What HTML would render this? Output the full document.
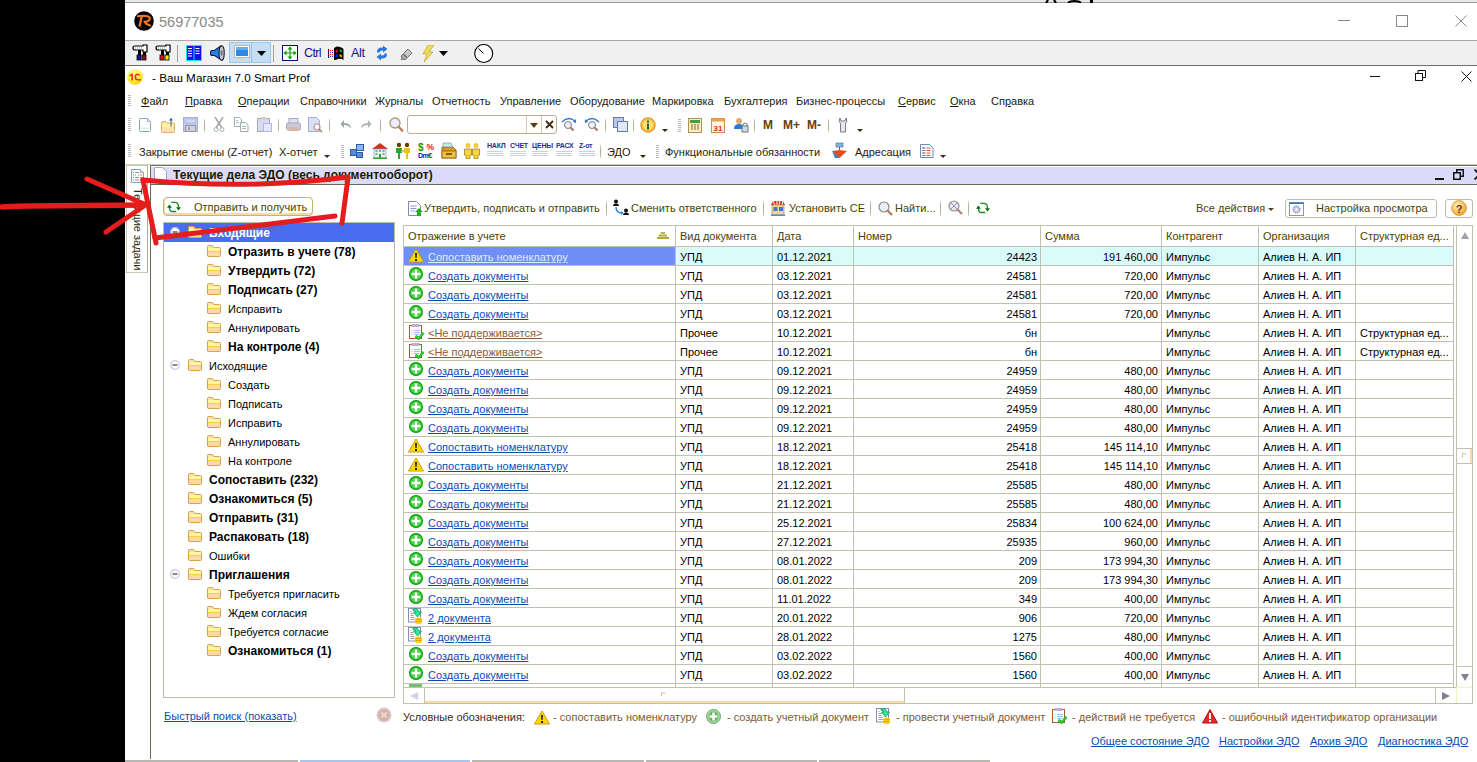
<!DOCTYPE html><html><head><meta charset="utf-8"><style>
*{box-sizing:border-box}
body{margin:0;width:1477px;height:762px;overflow:hidden;background:#000;position:relative;font-family:"Liberation Sans", sans-serif;font-size:11px;color:#000}
.a{position:absolute}
.t{position:absolute;white-space:nowrap;line-height:13px}
.b{font-weight:bold;font-size:12px}
.lnk{color:#0b4cb4;text-decoration:underline}
.ol{color:#4a4300}
</style></head><body>

<div class="a" style="left:125px;top:0;width:1352px;height:762px;background:#fff"></div>
<div class="a" style="left:125px;top:0;width:1352px;height:3px;background:#e8e8e8;border-bottom:1px solid #9a9a9a"></div>
<svg class="a" style="left:1040px;top:0px" width="60" height="3" viewBox="0 0 60 3"><path d="M6 3 L8 0 M14 0 L16 3" stroke="#000" stroke-width="2.2"/><path d="M28 3 Q30 1 34.5 1 Q39 1 41 3" stroke="#000" stroke-width="2" fill="none"/></svg>
<svg class="a" style="left:1090px;top:0px" width="6" height="3" viewBox="0 0 6 3"><rect x="0" y="0" width="3" height="3" fill="#000"/></svg>
<svg class="a" style="left:134px;top:11px" width="20" height="20" viewBox="0 0 20 20"><circle cx="10" cy="10" r="9.8" fill="#050505"/><path d="M3.8 5.2 Q10 4.6 13.5 5.2 Q16.5 6 15.6 8.3 Q14.6 10.6 10.8 10.8" stroke="#f07a22" stroke-width="2.1" fill="none" stroke-linecap="round"/><path d="M7.6 6.5 L5.7 14.6" stroke="#f07a22" stroke-width="2.3" stroke-linecap="round"/><path d="M10.5 10.8 Q12.5 13.6 16 14.4" stroke="#f07a22" stroke-width="2.1" fill="none" stroke-linecap="round"/></svg>
<div class="t" style="left:159px;top:13px;font-size:14.5px;color:#8a8a8a;line-height:18px">56977035</div>
<div class="a" style="left:1338px;top:20px;width:12px;height:1px;background:#888"></div>
<div class="a" style="left:1396px;top:15px;width:12px;height:12px;border:1px solid #888"></div>
<svg class="a" style="left:1455px;top:15px" width="12" height="12"><path d="M0.5 0.5L11.5 11.5M11.5 0.5L0.5 11.5" stroke="#888" stroke-width="1"/></svg>
<div class="a" style="left:125px;top:40px;width:1352px;height:26px;background:#f0f0f0;border-top:1px solid #a8a8a8;border-bottom:1px solid #707070"></div>
<svg class="a" style="left:127px;top:69px" width="16" height="16" viewBox="0 0 16 16"><defs><radialGradient id="g1c" cx="0.4" cy="0.3" r="0.75"><stop offset="0" stop-color="#fffcc0"/><stop offset="0.6" stop-color="#fff030"/><stop offset="1" stop-color="#f8d000"/></radialGradient></defs><circle cx="8" cy="8" r="7.8" fill="url(#g1c)"/><path d="M2.5 6 L5 4.5 L6 4.5 L6 11.5 L4.3 11.5 L4.3 6.8 L2.5 7.5Z" fill="#f83010"/><path d="M13 6.5 Q12.5 4.5 10.5 4.5 Q7.5 4.5 7.5 8 Q7.5 11.5 10.5 11.5 L14 11.5 L14 10 L10.5 10 Q9.2 10 9.2 8 Q9.2 6 10.5 6 Q11.3 6 11.5 6.8Z" fill="#f83010"/></svg>
<div class="t" style="left:152px;top:70px;font-size:11.7px;line-height:15px">- Ваш Магазин 7.0 Smart Prof</div>
<div class="a" style="left:1370px;top:76px;width:10px;height:1px;border-top:1.5px solid #111"></div>
<svg class="a" style="left:1415px;top:70px" width="11" height="11"><rect x="0.5" y="3.5" width="7" height="7" fill="none" stroke="#111"/><path d="M3 3.5V0.5H10.5V7.5H7.5" fill="none" stroke="#111"/></svg>
<svg class="a" style="left:1461px;top:71px" width="11" height="11"><path d="M0.5 0.5L10.5 10.5M10.5 0.5L0.5 10.5" stroke="#111" stroke-width="1"/></svg>
<div class="t" style="left:141px;top:95px;color:#1a1a10"><u>Ф</u>айл</div>
<div class="t" style="left:185px;top:95px;color:#1a1a10"><u>П</u>равка</div>
<div class="t" style="left:238px;top:95px;color:#1a1a10"><u>О</u>перации</div>
<div class="t" style="left:300px;top:95px;color:#1a1a10">Справочники</div>
<div class="t" style="left:375px;top:95px;color:#1a1a10">Журналы</div>
<div class="t" style="left:432px;top:95px;color:#1a1a10">Отчетность</div>
<div class="t" style="left:500px;top:95px;color:#1a1a10">Управление</div>
<div class="t" style="left:570px;top:95px;color:#1a1a10">Оборудование</div>
<div class="t" style="left:652px;top:95px;color:#1a1a10">Маркировка</div>
<div class="t" style="left:724px;top:95px;color:#1a1a10">Бухгалтерия</div>
<div class="t" style="left:796px;top:95px;color:#1a1a10">Бизнес-процессы</div>
<div class="t" style="left:898px;top:95px;color:#1a1a10"><u>С</u>ервис</div>
<div class="t" style="left:950px;top:95px;color:#1a1a10"><u>О</u>кна</div>
<div class="t" style="left:991px;top:95px;color:#1a1a10">Сп<u>р</u>авка</div>
<svg class="a" style="left:132px;top:44px" width="17" height="17" viewBox="0 0 17 17">
<path d="M1 4 Q1 2 3 2 L11 2 L11 1 L15 1 L15 8 L11 8 L11 6 L3 6 Q1 6 1 4Z" fill="#fff" stroke="#000" stroke-width="1.2"/>
<path d="M3 4h7" stroke="#888" stroke-dasharray="1 1"/>
<rect x="6" y="6" width="3" height="5" fill="#000"/><rect x="11" y="8" width="3" height="3" fill="#000"/>
<rect x="5" y="11" width="4" height="5" fill="#1010a0" stroke="#000" stroke-width="0.8"/><rect x="10" y="11" width="4" height="5" fill="#901010" stroke="#000" stroke-width="0.8"/></svg>
<svg class="a" style="left:155px;top:44px" width="17" height="17" viewBox="0 0 17 17">
<path d="M1 4 Q1 2 3 2 L11 2 L11 1 L15 1 L15 8 L11 8 L11 6 L3 6 Q1 6 1 4Z" fill="#fff" stroke="#000" stroke-width="1.2"/>
<path d="M3 4h7" stroke="#888" stroke-dasharray="1 1"/>
<rect x="6" y="6" width="3" height="5" fill="#000"/><rect x="11" y="8" width="3" height="3" fill="#000"/>
<rect x="5" y="11" width="4" height="5" fill="#f01010" stroke="#000" stroke-width="0.8"/><rect x="10" y="11" width="4" height="5" fill="#f8f000" stroke="#000" stroke-width="0.8"/></svg>
<div class="a" style="left:177px;top:45px;width:1px;height:17px;background:#a0a0a0"></div>
<svg class="a" style="left:186px;top:45px" width="16" height="16" viewBox="0 0 16 16"><rect x="0" y="0" width="16" height="16" fill="#10e8f8"/><rect x="1" y="1" width="6.5" height="14" fill="#1010e0"/><rect x="8.5" y="1" width="6.5" height="14" fill="#1010e0"/><path d="M2 3.5h4M2 6h4M2 8.5h4M2 11h4M9.5 3.5h4M9.5 6h4M9.5 8.5h4" stroke="#fff" stroke-width="1"/></svg>
<svg class="a" style="left:210px;top:45px" width="16" height="16" viewBox="0 0 16 16"><path d="M0.7 6.5 Q0.7 5.5 2 5.5 L4.5 5.5 L11 0.8 L12 15.2 L4.5 10.5 L2 10.5 Q0.7 10.5 0.7 9.5Z" fill="#2a80f0" stroke="#101830" stroke-width="1.1"/><ellipse cx="11.6" cy="8" rx="2.6" ry="7.2" fill="#c8c8d0" stroke="#101830" stroke-width="1.1"/><ellipse cx="11.6" cy="8" rx="1" ry="3" fill="#707080"/></svg>
<div class="a" style="left:229px;top:42px;width:42px;height:21px;background:#c6def3;border:1px solid #99c9ef"></div>
<div class="a" style="left:251px;top:43px;width:1px;height:19px;background:#99c9ef"></div>
<svg class="a" style="left:234px;top:45px" width="16" height="16" viewBox="0 0 16 16"><rect x="0.5" y="0.5" width="15" height="12" fill="#fff" stroke="#b8b8b8"/><rect x="2" y="2" width="12" height="9" fill="#2a88e8"/><rect x="2" y="2" width="12" height="3" fill="#60b0f0"/><rect x="6.5" y="12.5" width="3" height="1.5" fill="#c8c8c8"/><rect x="3" y="14" width="10" height="2" rx="1" fill="#d8d8d8"/></svg>
<svg class="a" style="left:257px;top:51px" width="9" height="5"><path d="M0 0h9L4.5 5z" fill="#000"/></svg>
<div class="a" style="left:273px;top:45px;width:1px;height:17px;background:#a0a0a0"></div>
<svg class="a" style="left:282px;top:45px" width="16" height="16" viewBox="0 0 16 16"><rect x="0.5" y="0.5" width="15" height="15" fill="#fff" stroke="#101070"/><path d="M8 2v12M2 8h12" stroke="#10a010" stroke-width="1.2"/><path d="M8 1.5l-2.5 3h5zM8 14.5l-2.5-3h5zM1.5 8l3-2.5v5zM14.5 8l-3-2.5v5z" fill="#10a010"/></svg>
<div class="t" style="left:304px;top:46px;font-size:12.5px;line-height:15px;color:#10109a;letter-spacing:-0.6px">Ctrl</div>
<svg class="a" style="left:328px;top:46px" width="16" height="15" viewBox="0 0 16 15"><path d="M6 2 Q9 -0.5 12 1 Q14 1.5 15.5 3 L15.5 14 Q13 12 10 13 Q8 14 6 14Z" fill="#000"/><path d="M7.5 5 L9.5 3 L10 5.5 L8 7Z" fill="#f01010"/><path d="M11.5 3 L13.5 4 L14 6.5 L12 5.5Z" fill="#10d010"/><path d="M7.5 9 L9.5 8 L10 10.5 L8 11.5Z" fill="#1020f0"/><path d="M11.5 8 L13.5 9 L14 11.5 L12 10.5Z" fill="#f0f010"/><path d="M0 4.5h5M0 8.5h5" stroke="#f02020" stroke-dasharray="1 1"/><path d="M0 6.5h5M0 10.5h5" stroke="#2040f0" stroke-dasharray="1 1"/><path d="M0.5 3v10" stroke="#000" stroke-dasharray="1 1"/></svg>
<div class="t" style="left:351px;top:46px;font-size:12.5px;line-height:15px;color:#10109a;letter-spacing:-0.3px">Alt</div>
<svg class="a" style="left:375px;top:45px" width="14" height="16" viewBox="0 0 14 16"><path d="M2 7 Q2 2 8 2.5 L8 0.5 L12.5 4 L8 7.5 L8 5.5 Q4.5 5 4 8Z" fill="#2a78e0"/><path d="M12 9 Q12 14 6 13.5 L6 15.5 L1.5 12 L6 8.5 L6 10.5 Q9.5 11 10 8Z" fill="#2a78e0"/></svg>
<svg class="a" style="left:400px;top:47px" width="14" height="14" viewBox="0 0 14 14"><path d="M1 13 L3 11" stroke="#808080" stroke-width="1.5"/><path d="M3 7 L7 11 L5.5 12.5 Q3 13 2 11.5 Q1 10 1.5 8.5Z" fill="#a8a8a8" stroke="#606060" stroke-width="0.8"/><path d="M5 6 L8 3 M8 9 L11 6" stroke="#707070" stroke-width="1.6"/><path d="M3.5 6.5 L8 2 L12 6 L7.5 10.5Z" fill="#c8c8c8" stroke="#606060" stroke-width="0.8"/></svg>
<svg class="a" style="left:421px;top:45px" width="14" height="17" viewBox="0 0 14 17"><path d="M7 0 L13 0 L8 7 L12 7 L3 17 L6 9 L2 9Z" fill="#ecdc60" stroke="#c0a820" stroke-width="0.7"/></svg>
<svg class="a" style="left:439px;top:51px" width="9" height="5"><path d="M0 0h9L4.5 5z" fill="#000"/></svg>
<svg class="a" style="left:474px;top:44px" width="20" height="20" viewBox="0 0 20 20"><circle cx="9.7" cy="9.5" r="9" fill="#fff" stroke="#000" stroke-width="1.1"/><path d="M4.5 4.5L9.5 9.5" stroke="#000" stroke-width="1"/></svg>
<div class="a" style="left:128px;top:95px;width:3px;height:12px;background:repeating-linear-gradient(#b8b8b8 0 1px,transparent 1px 2px)"></div>
<div class="a" style="left:128px;top:118px;width:3px;height:14px;background:repeating-linear-gradient(#b8b8b8 0 1px,transparent 1px 2px)"></div>
<div class="a" style="left:128px;top:144px;width:3px;height:13px;background:repeating-linear-gradient(#b8b8b8 0 1px,transparent 1px 2px)"></div>
<svg class="a" style="left:139px;top:118px" width="12" height="14" viewBox="0 0 12 14"><path d="M1.5 0.5h7l3 3v9q0 1 -1 1h-9q-1 0 -1 -1v-11q0 -1 1 -1z" fill="#fff" stroke="#88a8b0"/><path d="M8.5 0.5v3h3" fill="#e0e0f8" stroke="#b0b0e0"/><rect x="2" y="9.5" width="8" height="1.5" fill="#d0f0f8"/></svg>
<svg class="a" style="left:161px;top:117px" width="14" height="16" viewBox="0 0 14 16"><path d="M0.5 6 q0 -1.5 1.5 -1.5h3l1.5 1.5h6q1 0 1 1v7.5q0 1 -1 1h-11q-1 0 -1 -1z" fill="#fde0b0" stroke="#e0b060"/><rect x="1" y="7" width="12" height="3" fill="#fff4a0"/><path d="M10 1.5v8" stroke="#3a6a90" stroke-width="1"/><path d="M8 3.5l2-2.5 2 2.5z" fill="#2a5a98"/></svg>
<svg class="a" style="left:183px;top:117px" width="15" height="15" viewBox="0 0 15 15"><rect x="0.5" y="0.5" width="14" height="14" fill="#c0c8f8" stroke="#a8b0d0"/><rect x="3" y="2" width="9" height="4" fill="#d0d8f8" stroke="#a8b0c8" stroke-width="0.6"/><rect x="2.5" y="8.5" width="10" height="6" fill="#d0d0e0" stroke="#909898"/><rect x="5" y="10" width="2" height="3" fill="#a0a0a0"/></svg>
<div class="a" style="left:204px;top:119px;width:1px;height:13px;background:linear-gradient(#e0dca0,#b0b0a0 30%,#b0b0a0 70%,#e0dca0)"></div>
<svg class="a" style="left:213px;top:117px" width="12" height="15" viewBox="0 0 12 15"><path d="M2 0L9 11M10 0L3 11" stroke="#a0a0a8" stroke-width="1.4"/><circle cx="3" cy="12.5" r="2" fill="none" stroke="#98b0b8"/><circle cx="9" cy="12.5" r="2" fill="none" stroke="#98b0b8"/></svg>
<svg class="a" style="left:234px;top:117px" width="15" height="15" viewBox="0 0 15 15"><path d="M0.5 0.5h5l2 2v7h-7z" fill="#fff" stroke="#98b0a8"/><path d="M6.5 5.5h5l2.5 2.5v6.5h-7.5z" fill="#fff" stroke="#98b0a8"/><path d="M8 9.5h4M8 11.5h4" stroke="#b0b0e0"/><path d="M2 3.5h2M2 5.5h3" stroke="#b0b0e0"/></svg>
<svg class="a" style="left:257px;top:117px" width="15" height="15" viewBox="0 0 15 15"><rect x="0.5" y="1.5" width="12" height="13" fill="#d8d8f8" stroke="#a0b0a8"/><rect x="4" y="0" width="5" height="2.5" fill="#d8d0a0"/><rect x="6.5" y="6.5" width="8" height="8" fill="#e8e8ff" stroke="#b0b8e8"/></svg>
<div class="a" style="left:278px;top:119px;width:1px;height:13px;background:linear-gradient(#e0dca0,#b0b0a0 30%,#b0b0a0 70%,#e0dca0)"></div>
<svg class="a" style="left:286px;top:118px" width="15" height="14" viewBox="0 0 15 14"><rect x="3" y="0.5" width="9" height="5" fill="#e0e0f0" stroke="#a0a8c0"/><rect x="0.5" y="5" width="14" height="7" rx="1.5" fill="#c8c8d8" stroke="#a8a8b8"/><rect x="3" y="9" width="9" height="4" fill="#d8b8a0"/></svg>
<svg class="a" style="left:308px;top:117px" width="15" height="16" viewBox="0 0 15 16"><path d="M0.5 0.5h8l3 3v11h-11z" fill="#d8e0f8" stroke="#a0b0d8"/><circle cx="9" cy="10" r="3" fill="#fff" stroke="#c09080" stroke-width="1.2"/><path d="M11 12l3 3" stroke="#a08070" stroke-width="1.5"/></svg>
<div class="a" style="left:329px;top:119px;width:1px;height:13px;background:linear-gradient(#e0dca0,#b0b0a0 30%,#b0b0a0 70%,#e0dca0)"></div>
<svg class="a" style="left:340px;top:118px" width="12" height="12" viewBox="0 0 12 12"><path d="M11 11 Q11 5 4 5 L4 2 L0.5 6 L4 10 L4 7 Q9 7 11 11Z" fill="#9aa8a0"/></svg>
<svg class="a" style="left:360px;top:118px" width="12" height="12" viewBox="0 0 12 12"><path d="M1 11 Q1 5 8 5 L8 2 L11.5 6 L8 10 L8 7 Q3 7 1 11Z" fill="#a8b8b0"/></svg>
<div class="a" style="left:380px;top:119px;width:1px;height:13px;background:linear-gradient(#e0dca0,#b0b0a0 30%,#b0b0a0 70%,#e0dca0)"></div>
<svg class="a" style="left:389px;top:117px" width="15" height="16" viewBox="0 0 15 16"><circle cx="6" cy="6" r="5" fill="#e8f0ff" stroke="#b89070" stroke-width="1.3"/><path d="M9.5 9.5l4.5 5" stroke="#c07850" stroke-width="2.2"/></svg>
<div class="a" style="left:407px;top:115px;width:150px;height:19px;border:1px solid #b8b090;border-radius:3px;background:#fff"></div>
<div class="a" style="left:526px;top:116px;width:1px;height:17px;background:#d8d0b0"></div>
<div class="a" style="left:541px;top:116px;width:1px;height:17px;background:#d8d0b0"></div>
<svg class="a" style="left:530px;top:123px" width="8" height="5" viewBox="0 0 8 5"><path d="M0 0h8L4 5z" fill="#5a4010"/></svg>
<svg class="a" style="left:545px;top:120px" width="9" height="9" viewBox="0 0 9 9"><path d="M1 1L8 8M8 1L1 8" stroke="#3a2a10" stroke-width="1.8"/></svg>
<svg class="a" style="left:561px;top:117px" width="16" height="15" viewBox="0 0 16 15"><path d="M1 5 Q8 -2 15 5" stroke="#2a78d0" stroke-width="1.3" fill="none"/><path d="M15 6l-3 -1 3-3z" fill="#2a78d0"/><circle cx="7" cy="8" r="3.5" fill="#e8f0ff" stroke="#8a7a6a"/><path d="M9.5 10.5l3 3" stroke="#a07060" stroke-width="1.8"/></svg>
<svg class="a" style="left:584px;top:117px" width="16" height="15" viewBox="0 0 16 15"><path d="M1 5 Q8 -2 15 5" stroke="#2a78d0" stroke-width="1.3" fill="none"/><path d="M1 6l3 -1 -3-3z" fill="#2a78d0"/><circle cx="8" cy="8" r="3.5" fill="#e8f0ff" stroke="#8a7a6a"/><path d="M10.5 10.5l3 3" stroke="#a07060" stroke-width="1.8"/></svg>
<div class="a" style="left:605px;top:119px;width:1px;height:13px;background:linear-gradient(#e0dca0,#b0b0a0 30%,#b0b0a0 70%,#e0dca0)"></div>
<svg class="a" style="left:613px;top:117px" width="15" height="15" viewBox="0 0 15 15"><rect x="0.5" y="0.5" width="10" height="10" fill="#b8c8e8" stroke="#6a7aa8"/><rect x="4.5" y="4.5" width="10" height="10" fill="#e0e8f8" stroke="#6a7aa8"/></svg>
<div class="a" style="left:633px;top:119px;width:1px;height:13px;background:linear-gradient(#e0dca0,#b0b0a0 30%,#b0b0a0 70%,#e0dca0)"></div>
<svg class="a" style="left:640px;top:117px" width="16" height="16" viewBox="0 0 16 16"><circle cx="8" cy="8" r="7.2" fill="#f8c040" stroke="#d88a10"/><circle cx="8" cy="8" r="5" fill="#fce080"/><rect x="7" y="6.5" width="2" height="6" fill="#2a6a10"/><rect x="7" y="3.5" width="2" height="2" fill="#2a6a10"/></svg>
<svg class="a" style="left:662px;top:129px" width="6" height="3" viewBox="0 0 6 3"><path d="M0 0h6L3 3z" fill="#3a2a10"/></svg>
<div class="a" style="left:678px;top:119px;width:3px;height:14px;background:repeating-linear-gradient(#b8b8b8 0 1px,transparent 1px 2px)"></div>
<svg class="a" style="left:688px;top:118px" width="14" height="15" viewBox="0 0 14 15"><rect x="0.5" y="0.5" width="13" height="14" fill="#f8f0c0" stroke="#b09050"/><rect x="2" y="2" width="10" height="3" fill="#40a040"/><path d="M3 7h2M6 7h2M9 7h2M3 9h2M6 9h2M9 9h2M3 11h2M6 11h2M9 11h2" stroke="#806030"/></svg>
<svg class="a" style="left:711px;top:117px" width="14" height="16" viewBox="0 0 14 16"><rect x="0.5" y="1.5" width="13" height="14" fill="#fff8e0" stroke="#c89050"/><rect x="0.5" y="1.5" width="13" height="3" fill="#f0a050"/><text x="7" y="13.5" font-size="8" font-family="Liberation Sans" text-anchor="middle" fill="#e03010" font-weight="bold">31</text></svg>
<svg class="a" style="left:734px;top:117px" width="15" height="16" viewBox="0 0 15 16"><circle cx="5" cy="4" r="3" fill="#e8a870"/><path d="M0 12 Q0 7 5 7 Q10 7 10 12Z" fill="#2a78d0"/><rect x="8" y="9" width="6" height="6" fill="#d0d8e0" stroke="#707880"/><path d="M9 9 V7 Q11 5 13 7 V9" stroke="#707880" fill="none"/></svg>
<div class="a" style="left:754px;top:119px;width:1px;height:13px;background:linear-gradient(#e0dca0,#b0b0a0 30%,#b0b0a0 70%,#e0dca0)"></div>
<div class="t" style="left:763px;top:118px;font-size:12px;font-weight:bold;color:#6a4010;line-height:14px">M</div>
<div class="t" style="left:783px;top:118px;font-size:12px;font-weight:bold;color:#6a4010;line-height:14px">M+</div>
<div class="t" style="left:807px;top:118px;font-size:12px;font-weight:bold;color:#6a4010;line-height:14px">M-</div>
<div class="a" style="left:828px;top:119px;width:1px;height:13px;background:linear-gradient(#e0dca0,#b0b0a0 30%,#b0b0a0 70%,#e0dca0)"></div>
<svg class="a" style="left:837px;top:117px" width="12" height="16" viewBox="0 0 12 16"><path d="M3 1 Q1 4 3.5 6.5 L3.5 15 L8.5 15 L8.5 6.5 Q11 4 9 1 L8 4 L4 4 Z" fill="#e8e8f0" stroke="#7a7a8a"/></svg>
<svg class="a" style="left:857px;top:129px" width="6" height="3" viewBox="0 0 6 3"><path d="M0 0h6L3 3z" fill="#3a2a10"/></svg>
<div class="t" style="left:139px;top:146px;color:#2a1a0a">Закрытие смены (Z-отчет)</div>
<div class="t" style="left:279px;top:146px;color:#2a1a0a">X-отчет</div>
<svg class="a" style="left:324px;top:155px" width="6" height="3" viewBox="0 0 6 3"><path d="M0 0h6L3 3z" fill="#3a2a10"/></svg>
<div class="a" style="left:341px;top:145px;width:3px;height:13px;background:repeating-linear-gradient(#b8b8b8 0 1px,transparent 1px 2px)"></div>
<svg class="a" style="left:350px;top:144px" width="14" height="14" viewBox="0 0 14 14"><rect x="0.5" y="5.5" width="6" height="6" fill="#5a8ad8" stroke="#2a5aa8"/><rect x="6.5" y="8.5" width="6" height="5" fill="#5a8ad8" stroke="#2a5aa8"/><rect x="6.5" y="0.5" width="7" height="6" fill="#8ab8f0" stroke="#2a5aa8"/></svg>
<svg class="a" style="left:372px;top:142px" width="16" height="17" viewBox="0 0 16 17"><path d="M0 7 L8 1 L16 7Z" fill="#d03020"/><rect x="2" y="7" width="12" height="9" fill="#f0f0f0" stroke="#8090a0" stroke-width="0.6"/><path d="M3.5 9h2M7 9h2M10.5 9h2M3.5 12h2M10.5 12h2" stroke="#4a8ad0" stroke-width="1.5"/><rect x="7" y="12" width="2" height="4" fill="#30a030"/><rect x="1" y="15.5" width="14" height="1.5" fill="#30b030"/></svg>
<svg class="a" style="left:395px;top:142px" width="16" height="17" viewBox="0 0 16 17"><circle cx="4" cy="3" r="2.2" fill="#6a3a10"/><circle cx="12" cy="3" r="2.2" fill="#6a3a10"/><path d="M1 6h6v5h-2v6h-2v-6h-2z" fill="#30a030"/><path d="M9 6h6v5h-2v6h-2v-6h-2z" fill="#f0c020"/><path d="M6 9 L10 9" stroke="#e8a870" stroke-width="1.5"/></svg>
<svg class="a" style="left:418px;top:142px" width="17" height="17" viewBox="0 0 17 17"><text x="0" y="8.5" font-size="10" font-weight="bold" font-family="Liberation Sans" fill="#10a010">$</text><text x="8.5" y="8" font-size="8.5" font-weight="bold" font-family="Liberation Sans" fill="#f01010">%</text><text x="0" y="16" font-size="7" font-weight="bold" font-family="Liberation Sans" fill="#1010c0" letter-spacing="-0.5">Dm</text><text x="10" y="16" font-size="8" font-weight="bold" font-family="Liberation Sans" fill="#505010">€</text></svg>
<svg class="a" style="left:441px;top:142px" width="16" height="17" viewBox="0 0 16 17"><path d="M1 5h11l3 3v8h-14z" fill="#d89a20" stroke="#8a5a10" stroke-width="0.8"/><rect x="1" y="9" width="14" height="7" fill="#f0c040" stroke="#8a5a10" stroke-width="0.8"/><rect x="5" y="11" width="6" height="2" fill="#8a5a10"/><path d="M2 1h8l2 4h-10z" fill="#c8e8f0" stroke="#6a8a9a" stroke-width="0.6"/></svg>
<svg class="a" style="left:464px;top:142px" width="16" height="17" viewBox="0 0 16 17"><circle cx="4" cy="3.5" r="2.5" fill="#f0d020"/><circle cx="12" cy="3.5" r="2.5" fill="#f0d020"/><path d="M0.5 7h7v6h-1.5v4h-4v-4h-1.5z" fill="#f8d830" stroke="#806010" stroke-width="0.6"/><path d="M8.5 7h7v6h-1.5v4h-4v-4h-1.5z" fill="#f8d830" stroke="#806010" stroke-width="0.6"/></svg>
<div class="t" style="left:487px;top:141px;font-size:7px;font-weight:bold;color:#2030a0;line-height:9px;letter-spacing:-0.2px">НАКЛ</div>
<div class="a" style="left:487px;top:151px;width:16px;height:6px;background:repeating-linear-gradient(#c8d0e8 0 1px,transparent 1px 2px)"></div>
<div class="t" style="left:510px;top:141px;font-size:7px;font-weight:bold;color:#2030a0;line-height:9px;letter-spacing:-0.2px">СЧЕТ</div>
<div class="a" style="left:510px;top:151px;width:16px;height:6px;background:repeating-linear-gradient(#c8d0e8 0 1px,transparent 1px 2px)"></div>
<div class="t" style="left:532px;top:141px;font-size:7px;font-weight:bold;color:#2030a0;line-height:9px;letter-spacing:-0.2px">ЦЕНЫ</div>
<div class="a" style="left:532px;top:151px;width:16px;height:6px;background:repeating-linear-gradient(#c8d0e8 0 1px,transparent 1px 2px)"></div>
<div class="t" style="left:556px;top:141px;font-size:7px;font-weight:bold;color:#2030a0;line-height:9px;letter-spacing:-0.2px">РАСХ</div>
<div class="a" style="left:556px;top:151px;width:16px;height:6px;background:repeating-linear-gradient(#c8d0e8 0 1px,transparent 1px 2px)"></div>
<div class="t" style="left:579px;top:141px;font-size:7px;font-weight:bold;color:#2030a0;line-height:9px;letter-spacing:-0.2px">Z-от</div>
<div class="a" style="left:579px;top:151px;width:16px;height:6px;background:repeating-linear-gradient(#c8d0e8 0 1px,transparent 1px 2px)"></div>
<div class="a" style="left:600px;top:145px;width:1px;height:13px;background:linear-gradient(#e0dca0,#b0b0a0 30%,#b0b0a0 70%,#e0dca0)"></div>
<div class="t" style="left:607px;top:146px;color:#2a1a0a">ЭДО</div>
<svg class="a" style="left:640px;top:155px" width="6" height="3" viewBox="0 0 6 3"><path d="M0 0h6L3 3z" fill="#3a2a10"/></svg>
<div class="a" style="left:656px;top:145px;width:3px;height:13px;background:repeating-linear-gradient(#b8b8b8 0 1px,transparent 1px 2px)"></div>
<div class="t" style="left:665px;top:146px;color:#2a1a0a">Функциональные обязанности</div>
<svg class="a" style="left:831px;top:142px" width="17" height="17" viewBox="0 0 17 17"><rect x="5" y="1" width="7" height="4" fill="#8ab0e0" stroke="#4a6a9a" stroke-width="0.6"/><path d="M8.5 5v3" stroke="#4a6a9a"/><path d="M1 9 L8.5 8 L16 9 L8.5 16Z" fill="#e84a20"/><path d="M1 9 L8.5 16 L4 16Z" fill="#2a78d0"/></svg>
<div class="t" style="left:855px;top:146px;color:#2a1a0a">Адресация</div>
<svg class="a" style="left:920px;top:144px" width="14" height="14" viewBox="0 0 14 14"><path d="M0.5 0.5h9l3.5 3.5v9.5h-12.5z" fill="#fff" stroke="#6a8ab8"/><path d="M2.5 4h3M6.5 4h4M2.5 6.5h3M6.5 6.5h4M2.5 9h3M6.5 9h4M2.5 11.5h3M6.5 11.5h4" stroke="#e06030"/><path d="M2.5 4h2M2.5 6.5h2M2.5 9h2M2.5 11.5h2" stroke="#3a7ad0"/></svg>
<svg class="a" style="left:940px;top:155px" width="6" height="3" viewBox="0 0 6 3"><path d="M0 0h6L3 3z" fill="#3a2a10"/></svg>
<div class="a" style="left:125px;top:165px;width:25px;height:597px;background:#fff"></div>
<div class="a" style="left:126px;top:165px;width:22px;height:108px;border:1px solid #c8c4b0;border-right:1px solid #b0ac98;background:#fff"></div>
<svg class="a" style="left:131px;top:169px" width="13" height="14" viewBox="0 0 13 14"><path d="M0.5 0.5h9l3 3v10h-12z" fill="#fff" stroke="#7aa0b8"/><path d="M9.5 0.5v3h3" fill="#d8d8f8" stroke="#a0a8d8"/><path d="M2 3.5h1M2 6h1M2 8.5h1M2 11h1" stroke="#3a8ad8"/><path d="M4 3.5h4M4 6h1M7 6h1M4 8.5h4M4 11h4" stroke="#909090"/><path d="M9 6h2M9 8.5h2M9 11h2" stroke="#f06020"/></svg>
<div class="t" style="left:131px;top:188px;writing-mode:vertical-rl;color:#2a2a10;line-height:14px">Текущие задачи</div>
<div class="a" style="left:125px;top:164px;width:1352px;height:1px;background:#d0d0c0"></div>
<div class="a" style="left:150px;top:165px;width:1327px;height:20px;background:#dcdcfa;border-top:1px solid #6a6a50;border-bottom:1px solid #6a6a50;box-shadow:inset 0 1px 0 #fff"></div>
<div class="a" style="left:150px;top:165px;width:1px;height:594px;background:#6a6a50"></div>
<svg class="a" style="left:154px;top:167px" width="13" height="16" viewBox="0 0 13 16"><path d="M0.5 0.5h8l4 4v11h-12z" fill="#fff" stroke="#9aa8c8"/><rect x="1.5" y="12" width="10" height="2" fill="#d0f0f8"/></svg>
<div class="t" style="left:173px;top:168px;font-size:12px;font-weight:bold;color:#1a1a00;line-height:14px">Текущие дела ЭДО (весь документооборот)</div>
<div class="a" style="left:1435px;top:178px;width:9px;height:2px;background:#111"></div>
<svg class="a" style="left:1453px;top:169px" width="11" height="11" viewBox="0 0 11 11"><rect x="0.75" y="3.75" width="6.5" height="6.5" fill="none" stroke="#111" stroke-width="1.5"/><path d="M3.75 3.5V0.75H10.25V7.25H7.5" fill="none" stroke="#111" stroke-width="1.5"/></svg>
<svg class="a" style="left:1474px;top:169px" width="7" height="11" viewBox="0 0 7 11"><path d="M0.5 0.5L10.5 10.5M10.5 0.5L0.5 10.5" stroke="#111" stroke-width="1.6"/></svg>
<div class="a" style="left:163px;top:197px;width:150px;height:19px;border:1px solid #c0b868;border-radius:4px;background:#fff;box-shadow:inset 0 -2px 0 #fcd8a8, inset 1px 0 0 #fcd8a8"></div>
<svg class="a" style="left:164px;top:198px" width="20" height="16" viewBox="0 0 20 16"><path d="M7.3 4.4 H11.6 Q14.5 4.8 14.5 9.5" stroke="#189018" stroke-width="1.4" fill="none"/><path d="M12 9.3 H17 L14.5 12.5Z" fill="#0a6a0a"/><path d="M12.3 13.5 H7.8 Q5.4 13 5.4 9" stroke="#189018" stroke-width="1.4" fill="none"/><path d="M3 9.7 H7.9 L5.4 6.4Z" fill="#0a6a0a"/></svg>
<div class="t ol" style="left:194px;top:201px">Отправить и получить</div>
<div class="a" style="left:163px;top:222px;width:232px;height:476px;border:1px solid #c0bcac;background:#fff"></div>
<div class="a" style="left:164px;top:223px;width:230px;height:19px;background:#4a6cf0"></div>
<svg style="position:absolute;left:170px;top:227px" width="10" height="10" viewBox="0 0 10 10"><circle cx="5" cy="5" r="4.3" fill="#fff" stroke="#c8c8f0" stroke-width="1.2"/><path d="M2.5 5h5" stroke="#5a5a40" stroke-width="1.4"/></svg>
<svg style="position:absolute;left:188px;top:226px" width="14" height="12" viewBox="0 0 14 12"><path d="M0.5 11 V1.5 Q0.5 0.5 1.5 0.5 H5.5 L7 2.5 H12.5 Q13.5 2.5 13.5 3.5 V10.5 Q13.5 11.5 12.5 11.5 H1.5 Q0.5 11.5 0.5 10.5Z" fill="#fde0a8" stroke="#d8a050"/><rect x="1" y="3" width="12" height="3" fill="#fff6a0"/><rect x="1" y="6" width="12" height="1" fill="#f8d040"/><rect x="1" y="7" width="12" height="4" fill="#fdd8a8"/></svg>
<div class="t b" style="left:209px;top:226px;line-height:14px;color:#fff">Входящие</div>
<svg style="position:absolute;left:207px;top:245px" width="14" height="12" viewBox="0 0 14 12"><path d="M0.5 11 V1.5 Q0.5 0.5 1.5 0.5 H5.5 L7 2.5 H12.5 Q13.5 2.5 13.5 3.5 V10.5 Q13.5 11.5 12.5 11.5 H1.5 Q0.5 11.5 0.5 10.5Z" fill="#fde0a8" stroke="#d8a050"/><rect x="1" y="3" width="12" height="3" fill="#fff6a0"/><rect x="1" y="6" width="12" height="1" fill="#f8d040"/><rect x="1" y="7" width="12" height="4" fill="#fdd8a8"/></svg>
<div class="t b" style="left:228px;top:245px;line-height:14px;color:#000">Отразить в учете (78)</div>
<svg style="position:absolute;left:207px;top:264px" width="14" height="12" viewBox="0 0 14 12"><path d="M0.5 11 V1.5 Q0.5 0.5 1.5 0.5 H5.5 L7 2.5 H12.5 Q13.5 2.5 13.5 3.5 V10.5 Q13.5 11.5 12.5 11.5 H1.5 Q0.5 11.5 0.5 10.5Z" fill="#fde0a8" stroke="#d8a050"/><rect x="1" y="3" width="12" height="3" fill="#fff6a0"/><rect x="1" y="6" width="12" height="1" fill="#f8d040"/><rect x="1" y="7" width="12" height="4" fill="#fdd8a8"/></svg>
<div class="t b" style="left:228px;top:264px;line-height:14px;color:#000">Утвердить (72)</div>
<svg style="position:absolute;left:207px;top:283px" width="14" height="12" viewBox="0 0 14 12"><path d="M0.5 11 V1.5 Q0.5 0.5 1.5 0.5 H5.5 L7 2.5 H12.5 Q13.5 2.5 13.5 3.5 V10.5 Q13.5 11.5 12.5 11.5 H1.5 Q0.5 11.5 0.5 10.5Z" fill="#fde0a8" stroke="#d8a050"/><rect x="1" y="3" width="12" height="3" fill="#fff6a0"/><rect x="1" y="6" width="12" height="1" fill="#f8d040"/><rect x="1" y="7" width="12" height="4" fill="#fdd8a8"/></svg>
<div class="t b" style="left:228px;top:283px;line-height:14px;color:#000">Подписать (27)</div>
<svg style="position:absolute;left:207px;top:302px" width="14" height="12" viewBox="0 0 14 12"><path d="M0.5 11 V1.5 Q0.5 0.5 1.5 0.5 H5.5 L7 2.5 H12.5 Q13.5 2.5 13.5 3.5 V10.5 Q13.5 11.5 12.5 11.5 H1.5 Q0.5 11.5 0.5 10.5Z" fill="#fde0a8" stroke="#d8a050"/><rect x="1" y="3" width="12" height="3" fill="#fff6a0"/><rect x="1" y="6" width="12" height="1" fill="#f8d040"/><rect x="1" y="7" width="12" height="4" fill="#fdd8a8"/></svg>
<div class="t" style="left:228px;top:303px;color:#000">Исправить</div>
<svg style="position:absolute;left:207px;top:321px" width="14" height="12" viewBox="0 0 14 12"><path d="M0.5 11 V1.5 Q0.5 0.5 1.5 0.5 H5.5 L7 2.5 H12.5 Q13.5 2.5 13.5 3.5 V10.5 Q13.5 11.5 12.5 11.5 H1.5 Q0.5 11.5 0.5 10.5Z" fill="#fde0a8" stroke="#d8a050"/><rect x="1" y="3" width="12" height="3" fill="#fff6a0"/><rect x="1" y="6" width="12" height="1" fill="#f8d040"/><rect x="1" y="7" width="12" height="4" fill="#fdd8a8"/></svg>
<div class="t" style="left:228px;top:322px;color:#000">Аннулировать</div>
<svg style="position:absolute;left:207px;top:340px" width="14" height="12" viewBox="0 0 14 12"><path d="M0.5 11 V1.5 Q0.5 0.5 1.5 0.5 H5.5 L7 2.5 H12.5 Q13.5 2.5 13.5 3.5 V10.5 Q13.5 11.5 12.5 11.5 H1.5 Q0.5 11.5 0.5 10.5Z" fill="#fde0a8" stroke="#d8a050"/><rect x="1" y="3" width="12" height="3" fill="#fff6a0"/><rect x="1" y="6" width="12" height="1" fill="#f8d040"/><rect x="1" y="7" width="12" height="4" fill="#fdd8a8"/></svg>
<div class="t b" style="left:228px;top:340px;line-height:14px;color:#000">На контроле (4)</div>
<svg style="position:absolute;left:170px;top:360px" width="10" height="10" viewBox="0 0 10 10"><circle cx="5" cy="5" r="4.3" fill="#fff" stroke="#c8c8f0" stroke-width="1.2"/><path d="M2.5 5h5" stroke="#5a5a40" stroke-width="1.4"/></svg>
<svg style="position:absolute;left:188px;top:359px" width="14" height="12" viewBox="0 0 14 12"><path d="M0.5 11 V1.5 Q0.5 0.5 1.5 0.5 H5.5 L7 2.5 H12.5 Q13.5 2.5 13.5 3.5 V10.5 Q13.5 11.5 12.5 11.5 H1.5 Q0.5 11.5 0.5 10.5Z" fill="#fde0a8" stroke="#d8a050"/><rect x="1" y="3" width="12" height="3" fill="#fff6a0"/><rect x="1" y="6" width="12" height="1" fill="#f8d040"/><rect x="1" y="7" width="12" height="4" fill="#fdd8a8"/></svg>
<div class="t" style="left:209px;top:360px;color:#000">Исходящие</div>
<svg style="position:absolute;left:207px;top:378px" width="14" height="12" viewBox="0 0 14 12"><path d="M0.5 11 V1.5 Q0.5 0.5 1.5 0.5 H5.5 L7 2.5 H12.5 Q13.5 2.5 13.5 3.5 V10.5 Q13.5 11.5 12.5 11.5 H1.5 Q0.5 11.5 0.5 10.5Z" fill="#fde0a8" stroke="#d8a050"/><rect x="1" y="3" width="12" height="3" fill="#fff6a0"/><rect x="1" y="6" width="12" height="1" fill="#f8d040"/><rect x="1" y="7" width="12" height="4" fill="#fdd8a8"/></svg>
<div class="t" style="left:228px;top:379px;color:#000">Создать</div>
<svg style="position:absolute;left:207px;top:397px" width="14" height="12" viewBox="0 0 14 12"><path d="M0.5 11 V1.5 Q0.5 0.5 1.5 0.5 H5.5 L7 2.5 H12.5 Q13.5 2.5 13.5 3.5 V10.5 Q13.5 11.5 12.5 11.5 H1.5 Q0.5 11.5 0.5 10.5Z" fill="#fde0a8" stroke="#d8a050"/><rect x="1" y="3" width="12" height="3" fill="#fff6a0"/><rect x="1" y="6" width="12" height="1" fill="#f8d040"/><rect x="1" y="7" width="12" height="4" fill="#fdd8a8"/></svg>
<div class="t" style="left:228px;top:398px;color:#000">Подписать</div>
<svg style="position:absolute;left:207px;top:416px" width="14" height="12" viewBox="0 0 14 12"><path d="M0.5 11 V1.5 Q0.5 0.5 1.5 0.5 H5.5 L7 2.5 H12.5 Q13.5 2.5 13.5 3.5 V10.5 Q13.5 11.5 12.5 11.5 H1.5 Q0.5 11.5 0.5 10.5Z" fill="#fde0a8" stroke="#d8a050"/><rect x="1" y="3" width="12" height="3" fill="#fff6a0"/><rect x="1" y="6" width="12" height="1" fill="#f8d040"/><rect x="1" y="7" width="12" height="4" fill="#fdd8a8"/></svg>
<div class="t" style="left:228px;top:417px;color:#000">Исправить</div>
<svg style="position:absolute;left:207px;top:435px" width="14" height="12" viewBox="0 0 14 12"><path d="M0.5 11 V1.5 Q0.5 0.5 1.5 0.5 H5.5 L7 2.5 H12.5 Q13.5 2.5 13.5 3.5 V10.5 Q13.5 11.5 12.5 11.5 H1.5 Q0.5 11.5 0.5 10.5Z" fill="#fde0a8" stroke="#d8a050"/><rect x="1" y="3" width="12" height="3" fill="#fff6a0"/><rect x="1" y="6" width="12" height="1" fill="#f8d040"/><rect x="1" y="7" width="12" height="4" fill="#fdd8a8"/></svg>
<div class="t" style="left:228px;top:436px;color:#000">Аннулировать</div>
<svg style="position:absolute;left:207px;top:454px" width="14" height="12" viewBox="0 0 14 12"><path d="M0.5 11 V1.5 Q0.5 0.5 1.5 0.5 H5.5 L7 2.5 H12.5 Q13.5 2.5 13.5 3.5 V10.5 Q13.5 11.5 12.5 11.5 H1.5 Q0.5 11.5 0.5 10.5Z" fill="#fde0a8" stroke="#d8a050"/><rect x="1" y="3" width="12" height="3" fill="#fff6a0"/><rect x="1" y="6" width="12" height="1" fill="#f8d040"/><rect x="1" y="7" width="12" height="4" fill="#fdd8a8"/></svg>
<div class="t" style="left:228px;top:455px;color:#000">На контроле</div>
<svg style="position:absolute;left:188px;top:473px" width="14" height="12" viewBox="0 0 14 12"><path d="M0.5 11 V1.5 Q0.5 0.5 1.5 0.5 H5.5 L7 2.5 H12.5 Q13.5 2.5 13.5 3.5 V10.5 Q13.5 11.5 12.5 11.5 H1.5 Q0.5 11.5 0.5 10.5Z" fill="#fde0a8" stroke="#d8a050"/><rect x="1" y="3" width="12" height="3" fill="#fff6a0"/><rect x="1" y="6" width="12" height="1" fill="#f8d040"/><rect x="1" y="7" width="12" height="4" fill="#fdd8a8"/></svg>
<div class="t b" style="left:209px;top:473px;line-height:14px;color:#000">Сопоставить (232)</div>
<svg style="position:absolute;left:188px;top:492px" width="14" height="12" viewBox="0 0 14 12"><path d="M0.5 11 V1.5 Q0.5 0.5 1.5 0.5 H5.5 L7 2.5 H12.5 Q13.5 2.5 13.5 3.5 V10.5 Q13.5 11.5 12.5 11.5 H1.5 Q0.5 11.5 0.5 10.5Z" fill="#fde0a8" stroke="#d8a050"/><rect x="1" y="3" width="12" height="3" fill="#fff6a0"/><rect x="1" y="6" width="12" height="1" fill="#f8d040"/><rect x="1" y="7" width="12" height="4" fill="#fdd8a8"/></svg>
<div class="t b" style="left:209px;top:492px;line-height:14px;color:#000">Ознакомиться (5)</div>
<svg style="position:absolute;left:188px;top:511px" width="14" height="12" viewBox="0 0 14 12"><path d="M0.5 11 V1.5 Q0.5 0.5 1.5 0.5 H5.5 L7 2.5 H12.5 Q13.5 2.5 13.5 3.5 V10.5 Q13.5 11.5 12.5 11.5 H1.5 Q0.5 11.5 0.5 10.5Z" fill="#fde0a8" stroke="#d8a050"/><rect x="1" y="3" width="12" height="3" fill="#fff6a0"/><rect x="1" y="6" width="12" height="1" fill="#f8d040"/><rect x="1" y="7" width="12" height="4" fill="#fdd8a8"/></svg>
<div class="t b" style="left:209px;top:511px;line-height:14px;color:#000">Отправить (31)</div>
<svg style="position:absolute;left:188px;top:530px" width="14" height="12" viewBox="0 0 14 12"><path d="M0.5 11 V1.5 Q0.5 0.5 1.5 0.5 H5.5 L7 2.5 H12.5 Q13.5 2.5 13.5 3.5 V10.5 Q13.5 11.5 12.5 11.5 H1.5 Q0.5 11.5 0.5 10.5Z" fill="#fde0a8" stroke="#d8a050"/><rect x="1" y="3" width="12" height="3" fill="#fff6a0"/><rect x="1" y="6" width="12" height="1" fill="#f8d040"/><rect x="1" y="7" width="12" height="4" fill="#fdd8a8"/></svg>
<div class="t b" style="left:209px;top:530px;line-height:14px;color:#000">Распаковать (18)</div>
<svg style="position:absolute;left:188px;top:549px" width="14" height="12" viewBox="0 0 14 12"><path d="M0.5 11 V1.5 Q0.5 0.5 1.5 0.5 H5.5 L7 2.5 H12.5 Q13.5 2.5 13.5 3.5 V10.5 Q13.5 11.5 12.5 11.5 H1.5 Q0.5 11.5 0.5 10.5Z" fill="#fde0a8" stroke="#d8a050"/><rect x="1" y="3" width="12" height="3" fill="#fff6a0"/><rect x="1" y="6" width="12" height="1" fill="#f8d040"/><rect x="1" y="7" width="12" height="4" fill="#fdd8a8"/></svg>
<div class="t" style="left:209px;top:550px;color:#000">Ошибки</div>
<svg style="position:absolute;left:170px;top:569px" width="10" height="10" viewBox="0 0 10 10"><circle cx="5" cy="5" r="4.3" fill="#fff" stroke="#c8c8f0" stroke-width="1.2"/><path d="M2.5 5h5" stroke="#5a5a40" stroke-width="1.4"/></svg>
<svg style="position:absolute;left:188px;top:568px" width="14" height="12" viewBox="0 0 14 12"><path d="M0.5 11 V1.5 Q0.5 0.5 1.5 0.5 H5.5 L7 2.5 H12.5 Q13.5 2.5 13.5 3.5 V10.5 Q13.5 11.5 12.5 11.5 H1.5 Q0.5 11.5 0.5 10.5Z" fill="#fde0a8" stroke="#d8a050"/><rect x="1" y="3" width="12" height="3" fill="#fff6a0"/><rect x="1" y="6" width="12" height="1" fill="#f8d040"/><rect x="1" y="7" width="12" height="4" fill="#fdd8a8"/></svg>
<div class="t b" style="left:209px;top:568px;line-height:14px;color:#000">Приглашения</div>
<svg style="position:absolute;left:207px;top:587px" width="14" height="12" viewBox="0 0 14 12"><path d="M0.5 11 V1.5 Q0.5 0.5 1.5 0.5 H5.5 L7 2.5 H12.5 Q13.5 2.5 13.5 3.5 V10.5 Q13.5 11.5 12.5 11.5 H1.5 Q0.5 11.5 0.5 10.5Z" fill="#fde0a8" stroke="#d8a050"/><rect x="1" y="3" width="12" height="3" fill="#fff6a0"/><rect x="1" y="6" width="12" height="1" fill="#f8d040"/><rect x="1" y="7" width="12" height="4" fill="#fdd8a8"/></svg>
<div class="t" style="left:228px;top:588px;color:#000">Требуется пригласить</div>
<svg style="position:absolute;left:207px;top:606px" width="14" height="12" viewBox="0 0 14 12"><path d="M0.5 11 V1.5 Q0.5 0.5 1.5 0.5 H5.5 L7 2.5 H12.5 Q13.5 2.5 13.5 3.5 V10.5 Q13.5 11.5 12.5 11.5 H1.5 Q0.5 11.5 0.5 10.5Z" fill="#fde0a8" stroke="#d8a050"/><rect x="1" y="3" width="12" height="3" fill="#fff6a0"/><rect x="1" y="6" width="12" height="1" fill="#f8d040"/><rect x="1" y="7" width="12" height="4" fill="#fdd8a8"/></svg>
<div class="t" style="left:228px;top:607px;color:#000">Ждем согласия</div>
<svg style="position:absolute;left:207px;top:625px" width="14" height="12" viewBox="0 0 14 12"><path d="M0.5 11 V1.5 Q0.5 0.5 1.5 0.5 H5.5 L7 2.5 H12.5 Q13.5 2.5 13.5 3.5 V10.5 Q13.5 11.5 12.5 11.5 H1.5 Q0.5 11.5 0.5 10.5Z" fill="#fde0a8" stroke="#d8a050"/><rect x="1" y="3" width="12" height="3" fill="#fff6a0"/><rect x="1" y="6" width="12" height="1" fill="#f8d040"/><rect x="1" y="7" width="12" height="4" fill="#fdd8a8"/></svg>
<div class="t" style="left:228px;top:626px;color:#000">Требуется согласие</div>
<svg style="position:absolute;left:207px;top:644px" width="14" height="12" viewBox="0 0 14 12"><path d="M0.5 11 V1.5 Q0.5 0.5 1.5 0.5 H5.5 L7 2.5 H12.5 Q13.5 2.5 13.5 3.5 V10.5 Q13.5 11.5 12.5 11.5 H1.5 Q0.5 11.5 0.5 10.5Z" fill="#fde0a8" stroke="#d8a050"/><rect x="1" y="3" width="12" height="3" fill="#fff6a0"/><rect x="1" y="6" width="12" height="1" fill="#f8d040"/><rect x="1" y="7" width="12" height="4" fill="#fdd8a8"/></svg>
<div class="t b" style="left:228px;top:644px;line-height:14px;color:#000">Ознакомиться (1)</div>
<div class="t lnk" style="left:164px;top:710px">Быстрый поиск (показать)</div>
<svg class="a" style="left:376px;top:707px" width="16" height="16" viewBox="0 0 16 16"><circle cx="8" cy="8" r="7.5" fill="#d8cccc"/><circle cx="8" cy="8" r="6" fill="#d8b4a8"/><path d="M5.5 5.5l5 5M10.5 5.5l-5 5" stroke="#f0e0d8" stroke-width="1.5"/></svg>
<svg class="a" style="left:408px;top:201px" width="15" height="15" viewBox="0 0 15 15"><path d="M0.5 0.5h8l4 4v10h-12z" fill="#fff" stroke="#7a8ab0"/><path d="M2.5 5h6M2.5 7.5h6M2.5 10h4" stroke="#8a9ad0"/><path d="M11 7 L15 11 L13 11 L13 15 L9 15 L9 11 L7 11Z" fill="#20b020"/></svg>
<div class="t ol" style="left:424px;top:202px">Утвердить, подписать и отправить</div>
<div class="a" style="left:606px;top:201px;width:1px;height:15px;background:linear-gradient(#e0dca0,#b0b0a0 30%,#b0b0a0 70%,#e0dca0)"></div>
<svg class="a" style="left:612px;top:199px" width="18" height="18" viewBox="0 0 18 18"><circle cx="4" cy="2.5" r="2" fill="#111"/><path d="M1 7 Q1 4.5 4 4.5 Q7 4.5 7 7Z" fill="#111"/><circle cx="14" cy="11.5" r="2" fill="#111"/><path d="M11 16 Q11 13.5 14 13.5 Q17 13.5 17 16Z" fill="#111"/><path d="M4 8 Q4 14 10 14" stroke="#2a88e0" stroke-width="1.5" fill="none"/><path d="M9 12 L11.5 14 L9 16Z" fill="#2a88e0"/></svg>
<div class="t ol" style="left:631px;top:202px">Сменить ответственного</div>
<div class="a" style="left:763px;top:201px;width:1px;height:15px;background:linear-gradient(#e0dca0,#b0b0a0 30%,#b0b0a0 70%,#e0dca0)"></div>
<svg class="a" style="left:770px;top:200px" width="16" height="16" viewBox="0 0 16 16"><path d="M1 5 L3 1 L13 1 L15 5Z" fill="#e03020"/><path d="M3 1 L5 5 M7 1 L7 5 M10 1 L9 5 M13 1 L12 5" stroke="#fff" stroke-width="1"/><rect x="2" y="5" width="12" height="10" fill="#f0d890" stroke="#a08040" stroke-width="0.6"/><rect x="3.5" y="7" width="4" height="4" fill="#3a7ad0"/><rect x="9" y="7" width="4" height="4" fill="#3a7ad0"/><rect x="1" y="14.5" width="14" height="1.5" fill="#4a90e0"/></svg>
<div class="t ol" style="left:789px;top:202px">Установить СЕ</div>
<div class="a" style="left:870px;top:201px;width:1px;height:15px;background:linear-gradient(#e0dca0,#b0b0a0 30%,#b0b0a0 70%,#e0dca0)"></div>
<svg class="a" style="left:878px;top:201px" width="15" height="15" viewBox="0 0 15 15"><circle cx="6" cy="6" r="5" fill="#e8f0ff" stroke="#9a8a7a" stroke-width="1.2"/><path d="M9.5 9.5l4.5 4.5" stroke="#b07050" stroke-width="2"/></svg>
<div class="t ol" style="left:895px;top:202px">Найти...</div>
<div class="a" style="left:940px;top:201px;width:1px;height:15px;background:linear-gradient(#e0dca0,#b0b0a0 30%,#b0b0a0 70%,#e0dca0)"></div>
<svg class="a" style="left:948px;top:200px" width="15" height="16" viewBox="0 0 15 16"><circle cx="6" cy="6" r="5" fill="#e0e8f8" stroke="#a09080" stroke-width="1.2"/><path d="M3 3l6 6M9 3l-6 6" stroke="#9aa0b0" stroke-width="1"/><path d="M9.5 9.5l4.5 4.5" stroke="#b08060" stroke-width="2"/></svg>
<div class="a" style="left:968px;top:201px;width:1px;height:15px;background:linear-gradient(#e0dca0,#b0b0a0 30%,#b0b0a0 70%,#e0dca0)"></div>
<svg class="a" style="left:973px;top:199px" width="20" height="16" viewBox="0 0 20 16"><path d="M7.3 4.4 H11.6 Q14.5 4.8 14.5 9.5" stroke="#189018" stroke-width="1.4" fill="none"/><path d="M12 9.3 H17 L14.5 12.5Z" fill="#0a6a0a"/><path d="M12.3 13.5 H7.8 Q5.4 13 5.4 9" stroke="#189018" stroke-width="1.4" fill="none"/><path d="M3 9.7 H7.9 L5.4 6.4Z" fill="#0a6a0a"/></svg>
<div class="t ol" style="left:1196px;top:202px">Все действия</div>
<svg class="a" style="left:1268px;top:208px" width="6" height="3" viewBox="0 0 6 3"><path d="M0 0h6L3 3z" fill="#5a4010"/></svg>
<div class="a" style="left:1285px;top:199px;width:152px;height:19px;border:1px solid #c0bcac;border-radius:3px;background:#fff"></div>
<svg class="a" style="left:1289px;top:202px" width="15" height="14" viewBox="0 0 15 14"><rect x="0.5" y="0.5" width="14" height="13" fill="#fff" stroke="#8098b8"/><rect x="0.5" y="0.5" width="14" height="1.5" fill="#3a78b0"/><circle cx="7.5" cy="7.5" r="3.5" fill="#c8c8f8" stroke="#606060" stroke-width="1" stroke-dasharray="1 1"/><circle cx="7.5" cy="7.5" r="1.2" fill="#fff"/></svg>
<div class="t ol" style="left:1316px;top:202px">Настройка просмотра</div>
<div class="a" style="left:1445px;top:199px;width:28px;height:19px;border:1px solid #c0bcac;border-radius:3px;background:#fff"></div>
<svg class="a" style="left:1451px;top:200px" width="16" height="16" viewBox="0 0 16 16"><defs><radialGradient id="hg" cx="0.4" cy="0.35" r="0.7"><stop offset="0" stop-color="#fff0c0"/><stop offset="1" stop-color="#f0a020"/></radialGradient></defs><circle cx="8" cy="8" r="7.5" fill="url(#hg)" stroke="#d08010" stroke-width="0.6"/><text x="8" y="12.5" font-size="11" font-weight="bold" font-family="Liberation Sans" text-anchor="middle" fill="#6a4010">?</text></svg>
<div class="a" style="left:403px;top:225px;width:1070px;height:479px;border:1px solid #c4c0b0;background:#fff"></div>
<div class="t ol" style="left:408px;top:230px">Отражение в учете</div>
<div class="t ol" style="left:680px;top:230px">Вид документа</div>
<div class="t ol" style="left:777px;top:230px">Дата</div>
<div class="t ol" style="left:858px;top:230px">Номер</div>
<div class="t ol" style="left:1045px;top:230px">Сумма</div>
<div class="t ol" style="left:1166px;top:230px">Контрагент</div>
<div class="t ol" style="left:1263px;top:230px">Организация</div>
<div class="t ol" style="left:1360px;top:230px">Структурная ед...</div>
<svg class="a" style="left:657px;top:232px" width="12" height="7" viewBox="0 0 12 7"><rect x="3.5" y="0" width="4.5" height="2" fill="#c0b060"/><rect x="1.5" y="2" width="8.5" height="3" fill="#d8dca8"/><rect x="1.5" y="3" width="8.5" height="1.2" fill="#b8b050"/><rect x="0" y="5" width="12" height="2" fill="#b0a840"/></svg>
<div class="a" style="left:403px;top:246px;width:1050px;height:1px;background:#c4c0b0"></div>
<div class="a" style="left:403px;top:265px;width:1050px;height:1px;background:#c4c0b0"></div>
<div class="a" style="left:403px;top:284px;width:1050px;height:1px;background:#c4c0b0"></div>
<div class="a" style="left:403px;top:303px;width:1050px;height:1px;background:#c4c0b0"></div>
<div class="a" style="left:403px;top:322px;width:1050px;height:1px;background:#c4c0b0"></div>
<div class="a" style="left:403px;top:341px;width:1050px;height:1px;background:#c4c0b0"></div>
<div class="a" style="left:403px;top:360px;width:1050px;height:1px;background:#c4c0b0"></div>
<div class="a" style="left:403px;top:379px;width:1050px;height:1px;background:#c4c0b0"></div>
<div class="a" style="left:403px;top:398px;width:1050px;height:1px;background:#c4c0b0"></div>
<div class="a" style="left:403px;top:417px;width:1050px;height:1px;background:#c4c0b0"></div>
<div class="a" style="left:403px;top:436px;width:1050px;height:1px;background:#c4c0b0"></div>
<div class="a" style="left:403px;top:455px;width:1050px;height:1px;background:#c4c0b0"></div>
<div class="a" style="left:403px;top:474px;width:1050px;height:1px;background:#c4c0b0"></div>
<div class="a" style="left:403px;top:493px;width:1050px;height:1px;background:#c4c0b0"></div>
<div class="a" style="left:403px;top:512px;width:1050px;height:1px;background:#c4c0b0"></div>
<div class="a" style="left:403px;top:531px;width:1050px;height:1px;background:#c4c0b0"></div>
<div class="a" style="left:403px;top:550px;width:1050px;height:1px;background:#c4c0b0"></div>
<div class="a" style="left:403px;top:569px;width:1050px;height:1px;background:#c4c0b0"></div>
<div class="a" style="left:403px;top:588px;width:1050px;height:1px;background:#c4c0b0"></div>
<div class="a" style="left:403px;top:607px;width:1050px;height:1px;background:#c4c0b0"></div>
<div class="a" style="left:403px;top:626px;width:1050px;height:1px;background:#c4c0b0"></div>
<div class="a" style="left:403px;top:645px;width:1050px;height:1px;background:#c4c0b0"></div>
<div class="a" style="left:403px;top:664px;width:1050px;height:1px;background:#c4c0b0"></div>
<div class="a" style="left:403px;top:683px;width:1050px;height:1px;background:#c4c0b0"></div>
<div class="a" style="left:404px;top:247px;width:271px;height:18px;background:#6e8ef8"></div>
<div class="a" style="left:676px;top:247px;width:777px;height:18px;background:#d8fcfc"></div>
<div class="a" style="left:675px;top:225px;width:1px;height:462px;background:#c4c0b0"></div>
<div class="a" style="left:772px;top:225px;width:1px;height:462px;background:#c4c0b0"></div>
<div class="a" style="left:853px;top:225px;width:1px;height:462px;background:#c4c0b0"></div>
<div class="a" style="left:1040px;top:225px;width:1px;height:462px;background:#c4c0b0"></div>
<div class="a" style="left:1161px;top:225px;width:1px;height:462px;background:#c4c0b0"></div>
<div class="a" style="left:1258px;top:225px;width:1px;height:462px;background:#c4c0b0"></div>
<div class="a" style="left:1355px;top:225px;width:1px;height:462px;background:#c4c0b0"></div>
<div class="a" style="left:1453px;top:225px;width:1px;height:462px;background:#c4c0b0"></div>
<div class="a" style="left:1456px;top:225px;width:1px;height:462px;background:#c4c0b0"></div>
<svg style="position:absolute;left:408px;top:248px" width="16" height="15" viewBox="0 0 16 15"><path d="M8 1 L15.5 14 L0.5 14 Z" fill="#fcd800" stroke="#c8a000" stroke-width="1" stroke-linejoin="round"/><path d="M7 5 L9 5 L8.6 10 L7.4 10Z" fill="#222"/><rect x="7" y="11" width="2" height="2" fill="#222"/></svg>
<div class="t" style="left:428px;top:251px;color:#e0ecff;text-decoration:underline">Сопоставить номенклатуру</div>
<div class="t" style="left:680px;top:251px">УПД</div>
<div class="t" style="left:777px;top:251px">01.12.2021</div>
<div class="t" style="left:853px;width:184px;text-align:right;top:251px">24423</div>
<div class="t" style="left:1040px;width:118px;text-align:right;top:251px">191 460,00</div>
<div class="t" style="left:1166px;top:251px">Импульс</div>
<div class="t" style="left:1263px;top:251px">Алиев Н. А. ИП</div>
<svg style="position:absolute;left:409px;top:267px" width="14" height="14" viewBox="0 0 14 14"><circle cx="7" cy="7" r="6.4" fill="#48d448" stroke="#0c9a0c" stroke-width="1.2"/><rect x="5.8" y="2.6" width="2.4" height="8.8" fill="#fff"/><rect x="2.6" y="5.8" width="8.8" height="2.4" fill="#fff"/></svg>
<div class="t" style="left:428px;top:270px;color:#0b4cb4;text-decoration:underline">Создать документы</div>
<div class="t" style="left:680px;top:270px">УПД</div>
<div class="t" style="left:777px;top:270px">03.12.2021</div>
<div class="t" style="left:853px;width:184px;text-align:right;top:270px">24581</div>
<div class="t" style="left:1040px;width:118px;text-align:right;top:270px">720,00</div>
<div class="t" style="left:1166px;top:270px">Импульс</div>
<div class="t" style="left:1263px;top:270px">Алиев Н. А. ИП</div>
<svg style="position:absolute;left:409px;top:286px" width="14" height="14" viewBox="0 0 14 14"><circle cx="7" cy="7" r="6.4" fill="#48d448" stroke="#0c9a0c" stroke-width="1.2"/><rect x="5.8" y="2.6" width="2.4" height="8.8" fill="#fff"/><rect x="2.6" y="5.8" width="8.8" height="2.4" fill="#fff"/></svg>
<div class="t" style="left:428px;top:289px;color:#0b4cb4;text-decoration:underline">Создать документы</div>
<div class="t" style="left:680px;top:289px">УПД</div>
<div class="t" style="left:777px;top:289px">03.12.2021</div>
<div class="t" style="left:853px;width:184px;text-align:right;top:289px">24581</div>
<div class="t" style="left:1040px;width:118px;text-align:right;top:289px">720,00</div>
<div class="t" style="left:1166px;top:289px">Импульс</div>
<div class="t" style="left:1263px;top:289px">Алиев Н. А. ИП</div>
<svg style="position:absolute;left:409px;top:305px" width="14" height="14" viewBox="0 0 14 14"><circle cx="7" cy="7" r="6.4" fill="#48d448" stroke="#0c9a0c" stroke-width="1.2"/><rect x="5.8" y="2.6" width="2.4" height="8.8" fill="#fff"/><rect x="2.6" y="5.8" width="8.8" height="2.4" fill="#fff"/></svg>
<div class="t" style="left:428px;top:308px;color:#0b4cb4;text-decoration:underline">Создать документы</div>
<div class="t" style="left:680px;top:308px">УПД</div>
<div class="t" style="left:777px;top:308px">03.12.2021</div>
<div class="t" style="left:853px;width:184px;text-align:right;top:308px">24581</div>
<div class="t" style="left:1040px;width:118px;text-align:right;top:308px">720,00</div>
<div class="t" style="left:1166px;top:308px">Импульс</div>
<div class="t" style="left:1263px;top:308px">Алиев Н. А. ИП</div>
<svg style="position:absolute;left:409px;top:324px" width="16" height="16" viewBox="0 0 16 16"><rect x="0.5" y="1.5" width="12" height="13" fill="#fff" stroke="#a85a28"/><rect x="2.5" y="0" width="8" height="3" fill="#b8b0d8"/><path d="M2.5 6.5h1M5 6.5h6M2.5 8.5h1M5 8.5h6M2.5 10.5h1M5 10.5h5" stroke="#9ac0f0"/><path d="M6.5 12 L9.5 14.5 L14.5 9" stroke="#10a010" stroke-width="2.6" fill="none"/><path d="M6.5 12 L9.5 14.5 L14.5 9" stroke="#30e030" stroke-width="1.2" fill="none"/></svg>
<div class="t" style="left:428px;top:327px;color:#8a5a3a;text-decoration:underline">&lt;Не поддерживается&gt;</div>
<div class="t" style="left:680px;top:327px">Прочее</div>
<div class="t" style="left:777px;top:327px">10.12.2021</div>
<div class="t" style="left:853px;width:184px;text-align:right;top:327px">бн</div>
<div class="t" style="left:1040px;width:118px;text-align:right;top:327px"></div>
<div class="t" style="left:1166px;top:327px">Импульс</div>
<div class="t" style="left:1263px;top:327px">Алиев Н. А. ИП</div>
<div class="t" style="left:1360px;top:327px">Структурная ед...</div>
<svg style="position:absolute;left:409px;top:343px" width="16" height="16" viewBox="0 0 16 16"><rect x="0.5" y="1.5" width="12" height="13" fill="#fff" stroke="#a85a28"/><rect x="2.5" y="0" width="8" height="3" fill="#b8b0d8"/><path d="M2.5 6.5h1M5 6.5h6M2.5 8.5h1M5 8.5h6M2.5 10.5h1M5 10.5h5" stroke="#9ac0f0"/><path d="M6.5 12 L9.5 14.5 L14.5 9" stroke="#10a010" stroke-width="2.6" fill="none"/><path d="M6.5 12 L9.5 14.5 L14.5 9" stroke="#30e030" stroke-width="1.2" fill="none"/></svg>
<div class="t" style="left:428px;top:346px;color:#8a5a3a;text-decoration:underline">&lt;Не поддерживается&gt;</div>
<div class="t" style="left:680px;top:346px">Прочее</div>
<div class="t" style="left:777px;top:346px">10.12.2021</div>
<div class="t" style="left:853px;width:184px;text-align:right;top:346px">бн</div>
<div class="t" style="left:1040px;width:118px;text-align:right;top:346px"></div>
<div class="t" style="left:1166px;top:346px">Импульс</div>
<div class="t" style="left:1263px;top:346px">Алиев Н. А. ИП</div>
<div class="t" style="left:1360px;top:346px">Структурная ед...</div>
<svg style="position:absolute;left:409px;top:362px" width="14" height="14" viewBox="0 0 14 14"><circle cx="7" cy="7" r="6.4" fill="#48d448" stroke="#0c9a0c" stroke-width="1.2"/><rect x="5.8" y="2.6" width="2.4" height="8.8" fill="#fff"/><rect x="2.6" y="5.8" width="8.8" height="2.4" fill="#fff"/></svg>
<div class="t" style="left:428px;top:365px;color:#0b4cb4;text-decoration:underline">Создать документы</div>
<div class="t" style="left:680px;top:365px">УПД</div>
<div class="t" style="left:777px;top:365px">09.12.2021</div>
<div class="t" style="left:853px;width:184px;text-align:right;top:365px">24959</div>
<div class="t" style="left:1040px;width:118px;text-align:right;top:365px">480,00</div>
<div class="t" style="left:1166px;top:365px">Импульс</div>
<div class="t" style="left:1263px;top:365px">Алиев Н. А. ИП</div>
<svg style="position:absolute;left:409px;top:381px" width="14" height="14" viewBox="0 0 14 14"><circle cx="7" cy="7" r="6.4" fill="#48d448" stroke="#0c9a0c" stroke-width="1.2"/><rect x="5.8" y="2.6" width="2.4" height="8.8" fill="#fff"/><rect x="2.6" y="5.8" width="8.8" height="2.4" fill="#fff"/></svg>
<div class="t" style="left:428px;top:384px;color:#0b4cb4;text-decoration:underline">Создать документы</div>
<div class="t" style="left:680px;top:384px">УПД</div>
<div class="t" style="left:777px;top:384px">09.12.2021</div>
<div class="t" style="left:853px;width:184px;text-align:right;top:384px">24959</div>
<div class="t" style="left:1040px;width:118px;text-align:right;top:384px">480,00</div>
<div class="t" style="left:1166px;top:384px">Импульс</div>
<div class="t" style="left:1263px;top:384px">Алиев Н. А. ИП</div>
<svg style="position:absolute;left:409px;top:400px" width="14" height="14" viewBox="0 0 14 14"><circle cx="7" cy="7" r="6.4" fill="#48d448" stroke="#0c9a0c" stroke-width="1.2"/><rect x="5.8" y="2.6" width="2.4" height="8.8" fill="#fff"/><rect x="2.6" y="5.8" width="8.8" height="2.4" fill="#fff"/></svg>
<div class="t" style="left:428px;top:403px;color:#0b4cb4;text-decoration:underline">Создать документы</div>
<div class="t" style="left:680px;top:403px">УПД</div>
<div class="t" style="left:777px;top:403px">09.12.2021</div>
<div class="t" style="left:853px;width:184px;text-align:right;top:403px">24959</div>
<div class="t" style="left:1040px;width:118px;text-align:right;top:403px">480,00</div>
<div class="t" style="left:1166px;top:403px">Импульс</div>
<div class="t" style="left:1263px;top:403px">Алиев Н. А. ИП</div>
<svg style="position:absolute;left:409px;top:419px" width="14" height="14" viewBox="0 0 14 14"><circle cx="7" cy="7" r="6.4" fill="#48d448" stroke="#0c9a0c" stroke-width="1.2"/><rect x="5.8" y="2.6" width="2.4" height="8.8" fill="#fff"/><rect x="2.6" y="5.8" width="8.8" height="2.4" fill="#fff"/></svg>
<div class="t" style="left:428px;top:422px;color:#0b4cb4;text-decoration:underline">Создать документы</div>
<div class="t" style="left:680px;top:422px">УПД</div>
<div class="t" style="left:777px;top:422px">09.12.2021</div>
<div class="t" style="left:853px;width:184px;text-align:right;top:422px">24959</div>
<div class="t" style="left:1040px;width:118px;text-align:right;top:422px">480,00</div>
<div class="t" style="left:1166px;top:422px">Импульс</div>
<div class="t" style="left:1263px;top:422px">Алиев Н. А. ИП</div>
<svg style="position:absolute;left:408px;top:438px" width="16" height="15" viewBox="0 0 16 15"><path d="M8 1 L15.5 14 L0.5 14 Z" fill="#fcd800" stroke="#c8a000" stroke-width="1" stroke-linejoin="round"/><path d="M7 5 L9 5 L8.6 10 L7.4 10Z" fill="#222"/><rect x="7" y="11" width="2" height="2" fill="#222"/></svg>
<div class="t" style="left:428px;top:441px;color:#0b4cb4;text-decoration:underline">Сопоставить номенклатуру</div>
<div class="t" style="left:680px;top:441px">УПД</div>
<div class="t" style="left:777px;top:441px">18.12.2021</div>
<div class="t" style="left:853px;width:184px;text-align:right;top:441px">25418</div>
<div class="t" style="left:1040px;width:118px;text-align:right;top:441px">145 114,10</div>
<div class="t" style="left:1166px;top:441px">Импульс</div>
<div class="t" style="left:1263px;top:441px">Алиев Н. А. ИП</div>
<svg style="position:absolute;left:408px;top:457px" width="16" height="15" viewBox="0 0 16 15"><path d="M8 1 L15.5 14 L0.5 14 Z" fill="#fcd800" stroke="#c8a000" stroke-width="1" stroke-linejoin="round"/><path d="M7 5 L9 5 L8.6 10 L7.4 10Z" fill="#222"/><rect x="7" y="11" width="2" height="2" fill="#222"/></svg>
<div class="t" style="left:428px;top:460px;color:#0b4cb4;text-decoration:underline">Сопоставить номенклатуру</div>
<div class="t" style="left:680px;top:460px">УПД</div>
<div class="t" style="left:777px;top:460px">18.12.2021</div>
<div class="t" style="left:853px;width:184px;text-align:right;top:460px">25418</div>
<div class="t" style="left:1040px;width:118px;text-align:right;top:460px">145 114,10</div>
<div class="t" style="left:1166px;top:460px">Импульс</div>
<div class="t" style="left:1263px;top:460px">Алиев Н. А. ИП</div>
<svg style="position:absolute;left:409px;top:476px" width="14" height="14" viewBox="0 0 14 14"><circle cx="7" cy="7" r="6.4" fill="#48d448" stroke="#0c9a0c" stroke-width="1.2"/><rect x="5.8" y="2.6" width="2.4" height="8.8" fill="#fff"/><rect x="2.6" y="5.8" width="8.8" height="2.4" fill="#fff"/></svg>
<div class="t" style="left:428px;top:479px;color:#0b4cb4;text-decoration:underline">Создать документы</div>
<div class="t" style="left:680px;top:479px">УПД</div>
<div class="t" style="left:777px;top:479px">21.12.2021</div>
<div class="t" style="left:853px;width:184px;text-align:right;top:479px">25585</div>
<div class="t" style="left:1040px;width:118px;text-align:right;top:479px">480,00</div>
<div class="t" style="left:1166px;top:479px">Импульс</div>
<div class="t" style="left:1263px;top:479px">Алиев Н. А. ИП</div>
<svg style="position:absolute;left:409px;top:495px" width="14" height="14" viewBox="0 0 14 14"><circle cx="7" cy="7" r="6.4" fill="#48d448" stroke="#0c9a0c" stroke-width="1.2"/><rect x="5.8" y="2.6" width="2.4" height="8.8" fill="#fff"/><rect x="2.6" y="5.8" width="8.8" height="2.4" fill="#fff"/></svg>
<div class="t" style="left:428px;top:498px;color:#0b4cb4;text-decoration:underline">Создать документы</div>
<div class="t" style="left:680px;top:498px">УПД</div>
<div class="t" style="left:777px;top:498px">21.12.2021</div>
<div class="t" style="left:853px;width:184px;text-align:right;top:498px">25585</div>
<div class="t" style="left:1040px;width:118px;text-align:right;top:498px">480,00</div>
<div class="t" style="left:1166px;top:498px">Импульс</div>
<div class="t" style="left:1263px;top:498px">Алиев Н. А. ИП</div>
<svg style="position:absolute;left:409px;top:514px" width="14" height="14" viewBox="0 0 14 14"><circle cx="7" cy="7" r="6.4" fill="#48d448" stroke="#0c9a0c" stroke-width="1.2"/><rect x="5.8" y="2.6" width="2.4" height="8.8" fill="#fff"/><rect x="2.6" y="5.8" width="8.8" height="2.4" fill="#fff"/></svg>
<div class="t" style="left:428px;top:517px;color:#0b4cb4;text-decoration:underline">Создать документы</div>
<div class="t" style="left:680px;top:517px">УПД</div>
<div class="t" style="left:777px;top:517px">25.12.2021</div>
<div class="t" style="left:853px;width:184px;text-align:right;top:517px">25834</div>
<div class="t" style="left:1040px;width:118px;text-align:right;top:517px">100 624,00</div>
<div class="t" style="left:1166px;top:517px">Импульс</div>
<div class="t" style="left:1263px;top:517px">Алиев Н. А. ИП</div>
<svg style="position:absolute;left:409px;top:533px" width="14" height="14" viewBox="0 0 14 14"><circle cx="7" cy="7" r="6.4" fill="#48d448" stroke="#0c9a0c" stroke-width="1.2"/><rect x="5.8" y="2.6" width="2.4" height="8.8" fill="#fff"/><rect x="2.6" y="5.8" width="8.8" height="2.4" fill="#fff"/></svg>
<div class="t" style="left:428px;top:536px;color:#0b4cb4;text-decoration:underline">Создать документы</div>
<div class="t" style="left:680px;top:536px">УПД</div>
<div class="t" style="left:777px;top:536px">27.12.2021</div>
<div class="t" style="left:853px;width:184px;text-align:right;top:536px">25935</div>
<div class="t" style="left:1040px;width:118px;text-align:right;top:536px">960,00</div>
<div class="t" style="left:1166px;top:536px">Импульс</div>
<div class="t" style="left:1263px;top:536px">Алиев Н. А. ИП</div>
<svg style="position:absolute;left:409px;top:552px" width="14" height="14" viewBox="0 0 14 14"><circle cx="7" cy="7" r="6.4" fill="#48d448" stroke="#0c9a0c" stroke-width="1.2"/><rect x="5.8" y="2.6" width="2.4" height="8.8" fill="#fff"/><rect x="2.6" y="5.8" width="8.8" height="2.4" fill="#fff"/></svg>
<div class="t" style="left:428px;top:555px;color:#0b4cb4;text-decoration:underline">Создать документы</div>
<div class="t" style="left:680px;top:555px">УПД</div>
<div class="t" style="left:777px;top:555px">08.01.2022</div>
<div class="t" style="left:853px;width:184px;text-align:right;top:555px">209</div>
<div class="t" style="left:1040px;width:118px;text-align:right;top:555px">173 994,30</div>
<div class="t" style="left:1166px;top:555px">Импульс</div>
<div class="t" style="left:1263px;top:555px">Алиев Н. А. ИП</div>
<svg style="position:absolute;left:409px;top:571px" width="14" height="14" viewBox="0 0 14 14"><circle cx="7" cy="7" r="6.4" fill="#48d448" stroke="#0c9a0c" stroke-width="1.2"/><rect x="5.8" y="2.6" width="2.4" height="8.8" fill="#fff"/><rect x="2.6" y="5.8" width="8.8" height="2.4" fill="#fff"/></svg>
<div class="t" style="left:428px;top:574px;color:#0b4cb4;text-decoration:underline">Создать документы</div>
<div class="t" style="left:680px;top:574px">УПД</div>
<div class="t" style="left:777px;top:574px">08.01.2022</div>
<div class="t" style="left:853px;width:184px;text-align:right;top:574px">209</div>
<div class="t" style="left:1040px;width:118px;text-align:right;top:574px">173 994,30</div>
<div class="t" style="left:1166px;top:574px">Импульс</div>
<div class="t" style="left:1263px;top:574px">Алиев Н. А. ИП</div>
<svg style="position:absolute;left:409px;top:590px" width="14" height="14" viewBox="0 0 14 14"><circle cx="7" cy="7" r="6.4" fill="#48d448" stroke="#0c9a0c" stroke-width="1.2"/><rect x="5.8" y="2.6" width="2.4" height="8.8" fill="#fff"/><rect x="2.6" y="5.8" width="8.8" height="2.4" fill="#fff"/></svg>
<div class="t" style="left:428px;top:593px;color:#0b4cb4;text-decoration:underline">Создать документы</div>
<div class="t" style="left:680px;top:593px">УПД</div>
<div class="t" style="left:777px;top:593px">11.01.2022</div>
<div class="t" style="left:853px;width:184px;text-align:right;top:593px">349</div>
<div class="t" style="left:1040px;width:118px;text-align:right;top:593px">400,00</div>
<div class="t" style="left:1166px;top:593px">Импульс</div>
<div class="t" style="left:1263px;top:593px">Алиев Н. А. ИП</div>
<svg style="position:absolute;left:408px;top:608px" width="16" height="17" viewBox="0 0 16 17"><rect x="0.5" y="0.5" width="12" height="13.5" fill="#fff" stroke="#8a8ab8"/><path d="M2.5 3.5h1M2.5 5.5h3M2.5 7.5h3M2.5 9.5h4M2.5 11.5h4" stroke="#9a9a9a"/><path d="M5 1 Q10 0 11 4 L13.5 4 L9.5 9 L5.5 4 L8 4 Q7.5 2.5 5 2.5Z" fill="#28e8a0" stroke="#10a050" stroke-width="0.8"/><rect x="7" y="9.5" width="7" height="6.5" rx="2" fill="#f8d020"/><path d="M7.5 11.5h6M7.5 13.5h6" stroke="#e8a000"/></svg>
<div class="t" style="left:428px;top:612px;color:#0b4cb4;text-decoration:underline">2 документа</div>
<div class="t" style="left:680px;top:612px">УПД</div>
<div class="t" style="left:777px;top:612px">20.01.2022</div>
<div class="t" style="left:853px;width:184px;text-align:right;top:612px">906</div>
<div class="t" style="left:1040px;width:118px;text-align:right;top:612px">720,00</div>
<div class="t" style="left:1166px;top:612px">Импульс</div>
<div class="t" style="left:1263px;top:612px">Алиев Н. А. ИП</div>
<svg style="position:absolute;left:408px;top:627px" width="16" height="17" viewBox="0 0 16 17"><rect x="0.5" y="0.5" width="12" height="13.5" fill="#fff" stroke="#8a8ab8"/><path d="M2.5 3.5h1M2.5 5.5h3M2.5 7.5h3M2.5 9.5h4M2.5 11.5h4" stroke="#9a9a9a"/><path d="M5 1 Q10 0 11 4 L13.5 4 L9.5 9 L5.5 4 L8 4 Q7.5 2.5 5 2.5Z" fill="#28e8a0" stroke="#10a050" stroke-width="0.8"/><rect x="7" y="9.5" width="7" height="6.5" rx="2" fill="#f8d020"/><path d="M7.5 11.5h6M7.5 13.5h6" stroke="#e8a000"/></svg>
<div class="t" style="left:428px;top:631px;color:#0b4cb4;text-decoration:underline">2 документа</div>
<div class="t" style="left:680px;top:631px">УПД</div>
<div class="t" style="left:777px;top:631px">28.01.2022</div>
<div class="t" style="left:853px;width:184px;text-align:right;top:631px">1275</div>
<div class="t" style="left:1040px;width:118px;text-align:right;top:631px">480,00</div>
<div class="t" style="left:1166px;top:631px">Импульс</div>
<div class="t" style="left:1263px;top:631px">Алиев Н. А. ИП</div>
<svg style="position:absolute;left:409px;top:647px" width="14" height="14" viewBox="0 0 14 14"><circle cx="7" cy="7" r="6.4" fill="#48d448" stroke="#0c9a0c" stroke-width="1.2"/><rect x="5.8" y="2.6" width="2.4" height="8.8" fill="#fff"/><rect x="2.6" y="5.8" width="8.8" height="2.4" fill="#fff"/></svg>
<div class="t" style="left:428px;top:650px;color:#0b4cb4;text-decoration:underline">Создать документы</div>
<div class="t" style="left:680px;top:650px">УПД</div>
<div class="t" style="left:777px;top:650px">03.02.2022</div>
<div class="t" style="left:853px;width:184px;text-align:right;top:650px">1560</div>
<div class="t" style="left:1040px;width:118px;text-align:right;top:650px">400,00</div>
<div class="t" style="left:1166px;top:650px">Импульс</div>
<div class="t" style="left:1263px;top:650px">Алиев Н. А. ИП</div>
<svg style="position:absolute;left:409px;top:666px" width="14" height="14" viewBox="0 0 14 14"><circle cx="7" cy="7" r="6.4" fill="#48d448" stroke="#0c9a0c" stroke-width="1.2"/><rect x="5.8" y="2.6" width="2.4" height="8.8" fill="#fff"/><rect x="2.6" y="5.8" width="8.8" height="2.4" fill="#fff"/></svg>
<div class="t" style="left:428px;top:669px;color:#0b4cb4;text-decoration:underline">Создать документы</div>
<div class="t" style="left:680px;top:669px">УПД</div>
<div class="t" style="left:777px;top:669px">03.02.2022</div>
<div class="t" style="left:853px;width:184px;text-align:right;top:669px">1560</div>
<div class="t" style="left:1040px;width:118px;text-align:right;top:669px">400,00</div>
<div class="t" style="left:1166px;top:669px">Импульс</div>
<div class="t" style="left:1263px;top:669px">Алиев Н. А. ИП</div>
<div class="a" style="left:409px;top:684px;width:13px;height:3px;background:#70c070"></div>
<svg class="a" style="left:1461px;top:232px" width="8" height="7" viewBox="0 0 8 7"><path d="M4 0 L8 7 L0 7Z" fill="#a0a0b0"/></svg>
<div class="a" style="left:1456px;top:666px;width:16px;height:1px;background:#c4c0b0"></div>
<svg class="a" style="left:1461px;top:674px" width="8" height="7" viewBox="0 0 8 7"><path d="M0 0 L8 0 L4 7Z" fill="#808090"/></svg>
<div class="a" style="left:1456px;top:448px;width:16px;height:1px;background:#c4c0b0"></div>
<div class="a" style="left:1456px;top:463px;width:16px;height:1px;background:#c4c0b0"></div>
<div class="a" style="left:1470px;top:449px;width:2px;height:14px;background:#fdd8a0"></div>
<svg class="a" style="left:1462px;top:453px" width="5" height="5" viewBox="0 0 5 5"><path d="M0.5 4.5 L0.5 0.5 L4.5 1.5" stroke="#d0d0a0" stroke-width="1.2" fill="none"/></svg>
<svg class="a" style="left:661px;top:692px" width="5" height="5" viewBox="0 0 5 5"><path d="M0.5 4.5 L0.5 0.5 L4.5 1.5" stroke="#d0d0a0" stroke-width="1.2" fill="none"/></svg>
<div class="a" style="left:403px;top:687px;width:1069px;height:1px;background:#c4c0b0"></div>
<div class="a" style="left:424px;top:688px;width:1px;height:15px;background:#c4c0b0"></div>
<svg class="a" style="left:410px;top:692px" width="8" height="8" viewBox="0 0 8 8"><path d="M0 4 L8 0 L8 8Z" fill="#d8d0e8"/></svg>
<div class="a" style="left:425px;top:701px;width:479px;height:2px;background:#f8d8a8"></div>
<div class="a" style="left:904px;top:688px;width:1px;height:15px;background:#c4c0b0"></div>
<div class="a" style="left:1435px;top:688px;width:1px;height:15px;background:#c4c0b0"></div>
<div class="a" style="left:1456px;top:687px;width:1px;height:16px;background:#f0f0c0"></div>
<div class="a" style="left:1456px;top:687px;width:16px;height:1px;background:#f0f0c0"></div>
<svg class="a" style="left:1442px;top:692px" width="8" height="8" viewBox="0 0 8 8"><path d="M8 4 L0 0 L0 8Z" fill="#808090"/></svg>
<div class="t" style="left:403px;top:711px;color:#402810">Условные обозначения:</div>
<svg style="position:absolute;left:534px;top:710px" width="16" height="15" viewBox="0 0 16 15"><path d="M8 1 L15.5 14 L0.5 14 Z" fill="#fcd800" stroke="#c8a000" stroke-width="1" stroke-linejoin="round"/><path d="M7 5 L9 5 L8.6 10 L7.4 10Z" fill="#222"/><rect x="7" y="11" width="2" height="2" fill="#222"/></svg>
<div class="t" style="left:553px;top:711px;color:#7a5a3a">- сопоставить номенклатуру</div>
<svg class="a" style="left:706px;top:709px" width="15" height="15" viewBox="0 0 15 15"><circle cx="7.5" cy="7.5" r="7" fill="#a8d8a0" stroke="#70a870"/><circle cx="7.5" cy="7.5" r="5" fill="#60b860"/><rect x="6.3" y="3.5" width="2.4" height="8" fill="#fff"/><rect x="3.5" y="6.3" width="8" height="2.4" fill="#fff"/></svg>
<div class="t" style="left:727px;top:711px;color:#7a5a3a">- создать учетный документ</div>
<svg style="position:absolute;left:876px;top:708px" width="16" height="17" viewBox="0 0 16 17"><rect x="0.5" y="0.5" width="12" height="13.5" fill="#fff" stroke="#8a8ab8"/><path d="M2.5 3.5h1M2.5 5.5h3M2.5 7.5h3M2.5 9.5h4M2.5 11.5h4" stroke="#9a9a9a"/><path d="M5 1 Q10 0 11 4 L13.5 4 L9.5 9 L5.5 4 L8 4 Q7.5 2.5 5 2.5Z" fill="#28e8a0" stroke="#10a050" stroke-width="0.8"/><rect x="7" y="9.5" width="7" height="6.5" rx="2" fill="#f8d020"/><path d="M7.5 11.5h6M7.5 13.5h6" stroke="#e8a000"/></svg>
<div class="t" style="left:896px;top:711px;color:#7a5a3a">- провести учетный документ</div>
<svg style="position:absolute;left:1052px;top:708px" width="16" height="16" viewBox="0 0 16 16"><rect x="0.5" y="1.5" width="12" height="13" fill="#fff" stroke="#a85a28"/><rect x="2.5" y="0" width="8" height="3" fill="#b8b0d8"/><path d="M2.5 6.5h1M5 6.5h6M2.5 8.5h1M5 8.5h6M2.5 10.5h1M5 10.5h5" stroke="#9ac0f0"/><path d="M6.5 12 L9.5 14.5 L14.5 9" stroke="#10a010" stroke-width="2.6" fill="none"/><path d="M6.5 12 L9.5 14.5 L14.5 9" stroke="#30e030" stroke-width="1.2" fill="none"/></svg>
<div class="t" style="left:1072px;top:711px;color:#7a5a3a">- действий не требуется</div>
<svg class="a" style="left:1202px;top:709px" width="16" height="15" viewBox="0 0 16 15"><path d="M8 0.5 L15.5 14 L0.5 14 Z" fill="#e82828" stroke="#b01010"/><rect x="7" y="4" width="2" height="6" fill="#fff"/><rect x="7" y="11" width="2" height="2" fill="#fff"/></svg>
<div class="t" style="left:1222px;top:711px;color:#7a5a3a">- ошибочный идентификатор организации</div>
<div class="t lnk" style="left:1091px;top:735px">Общее состояние ЭДО</div>
<div class="t lnk" style="left:1219px;top:735px">Настройки ЭДО</div>
<div class="t lnk" style="left:1310px;top:735px">Архив ЭДО</div>
<div class="t lnk" style="left:1378px;top:735px">Диагностика ЭДО</div>
<div class="a" style="left:125px;top:760px;width:173px;height:2px;background:#b8b8b0"></div>
<div class="a" style="left:300px;top:760px;width:170px;height:2px;background:#a8c4f0"></div>
<div class="a" style="left:472px;top:760px;width:172px;height:2px;background:#b8b8b0"></div>
<div class="a" style="left:646px;top:760px;width:171px;height:2px;background:#b8b8b0"></div>
<div class="a" style="left:819px;top:760px;width:171px;height:2px;background:#b8b8b0"></div>
<svg class="a" style="left:0;top:0" width="1477" height="762" viewBox="0 0 1477 762">
<g fill="none" stroke="#e41c1c" stroke-linecap="round" stroke-linejoin="round">
<path d="M2 207 Q20 206 30 206 L144 205" stroke-width="5.5"/>
<path d="M87 179 L144 204" stroke-width="5"/>
<path d="M106 232 L144 206" stroke-width="5"/>
<path d="M143 180 Q250 190 348 177" stroke-width="5"/>
<path d="M348 178 L342 223" stroke-width="5"/>
<path d="M335 216 L155 238" stroke-width="5"/>
<path d="M143 180 L156 243" stroke-width="5"/>
</g></svg>
</body></html>
